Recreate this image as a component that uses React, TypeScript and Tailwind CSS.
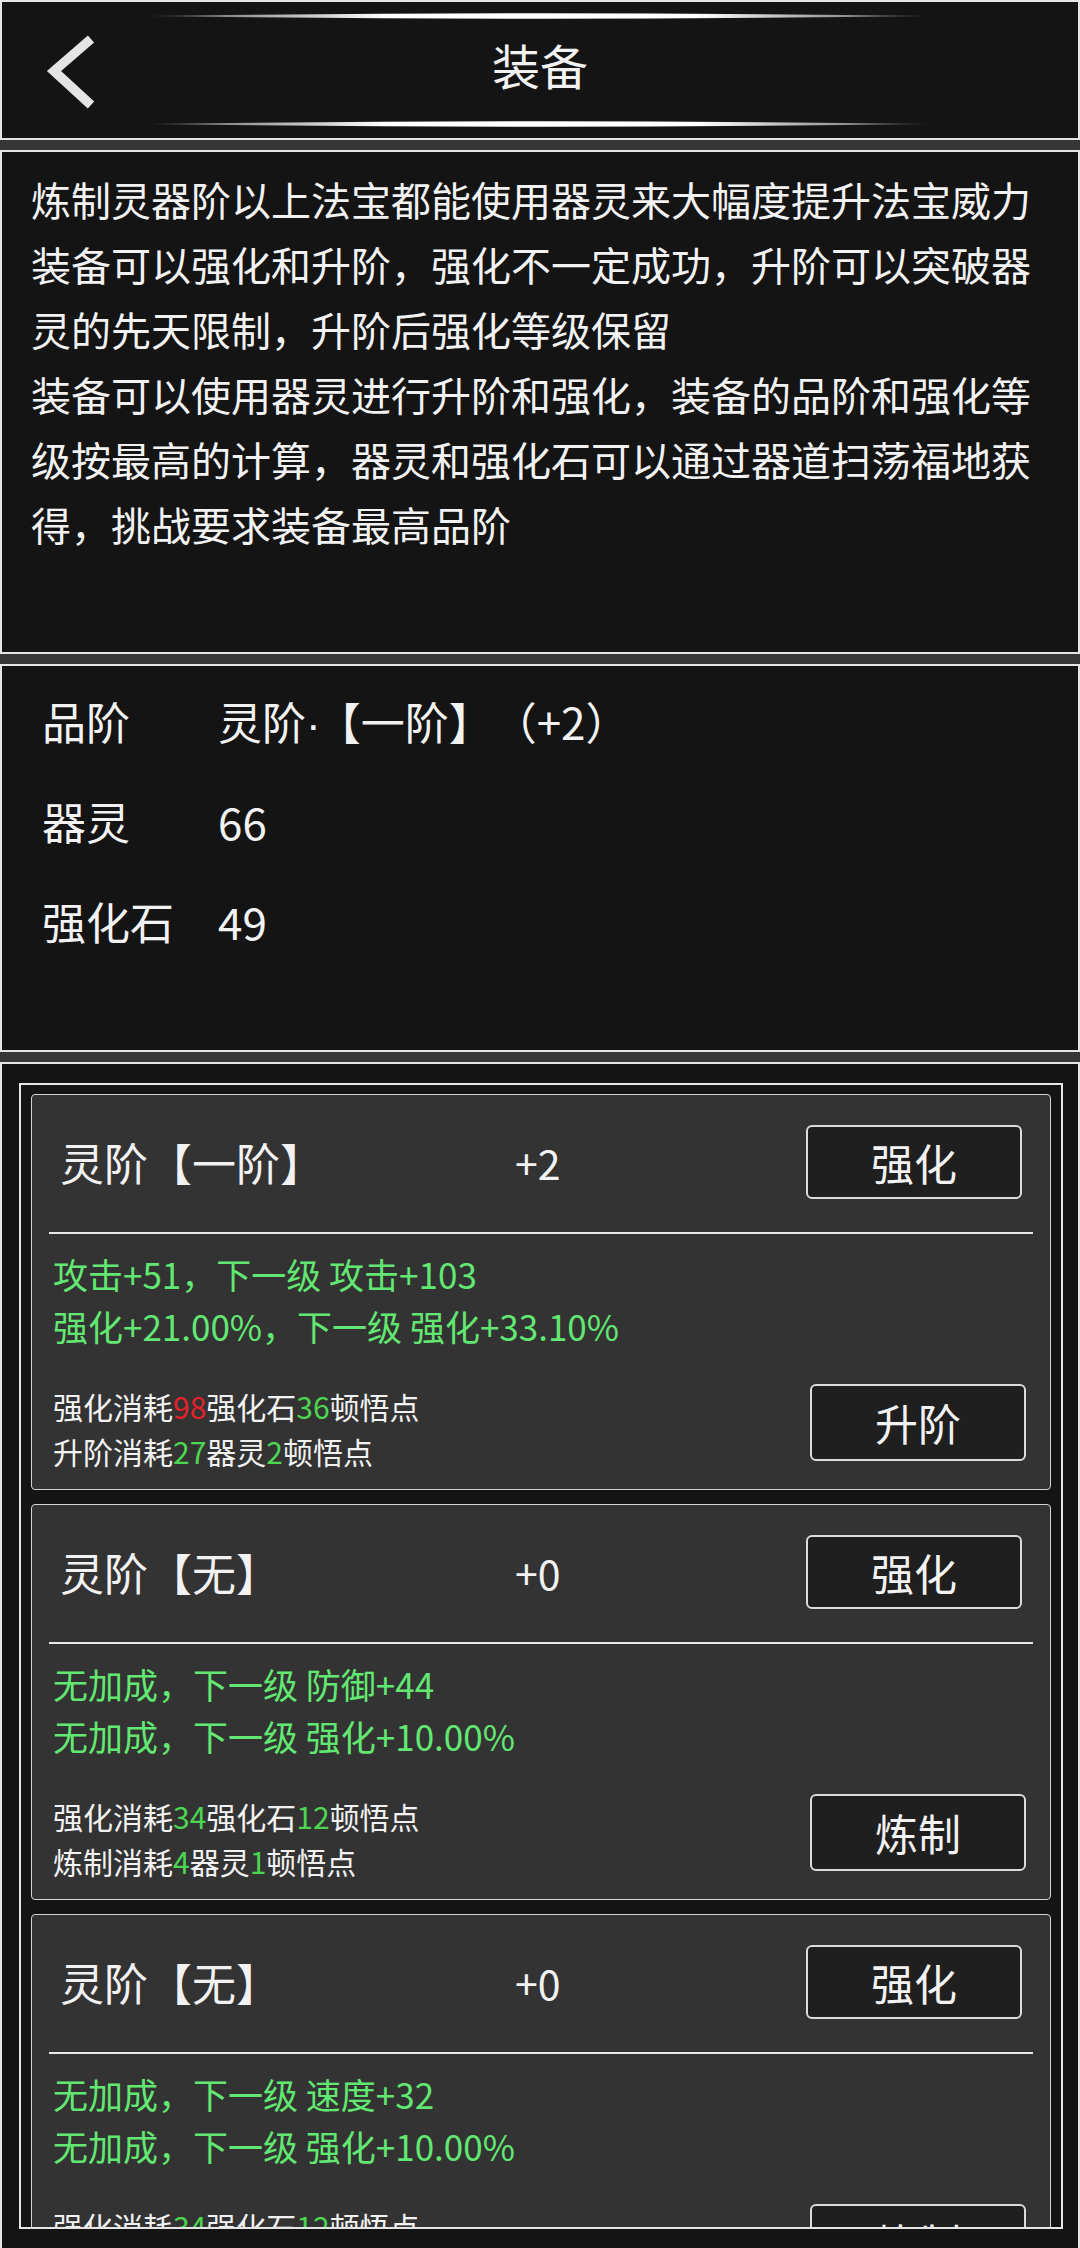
import React from 'react';

type Seg = { t: string; c?: 'r' | 'g' };

type Item = {
  title: string;
  plus: string;
  bonus: [string, string];
  cost: [Seg[], Seg[]];
  action: string;
};

const items: Item[] = [
  {
    title: '灵阶【一阶】',
    plus: '+2',
    bonus: ['攻击+51，下一级 攻击+103', '强化+21.00%，下一级 强化+33.10%'],
    cost: [
      [{ t: '强化消耗' }, { t: '98', c: 'r' }, { t: '强化石' }, { t: '36', c: 'g' }, { t: '顿悟点' }],
      [{ t: '升阶消耗' }, { t: '27', c: 'g' }, { t: '器灵' }, { t: '2', c: 'g' }, { t: '顿悟点' }],
    ],
    action: '升阶',
  },
  {
    title: '灵阶【无】',
    plus: '+0',
    bonus: ['无加成，下一级 防御+44', '无加成，下一级 强化+10.00%'],
    cost: [
      [{ t: '强化消耗' }, { t: '34', c: 'g' }, { t: '强化石' }, { t: '12', c: 'g' }, { t: '顿悟点' }],
      [{ t: '炼制消耗' }, { t: '4', c: 'g' }, { t: '器灵' }, { t: '1', c: 'g' }, { t: '顿悟点' }],
    ],
    action: '炼制',
  },
  {
    title: '灵阶【无】',
    plus: '+0',
    bonus: ['无加成，下一级 速度+32', '无加成，下一级 强化+10.00%'],
    cost: [
      [{ t: '强化消耗' }, { t: '34', c: 'g' }, { t: '强化石' }, { t: '12', c: 'g' }, { t: '顿悟点' }],
      [{ t: '炼制消耗' }, { t: '4', c: 'g' }, { t: '器灵' }, { t: '1', c: 'g' }, { t: '顿悟点' }],
    ],
    action: '炼制',
  },
];

const Glow = () => (
  <svg width="780" height="8" viewBox="0 0 780 8">
    <defs>
      <linearGradient id="glow" x1="0" x2="1" y1="0" y2="0">
        <stop offset="0" stopColor="#444" />
        <stop offset="0.12" stopColor="#999" />
        <stop offset="0.3" stopColor="#fff" />
        <stop offset="0.7" stopColor="#fff" />
        <stop offset="0.88" stopColor="#999" />
        <stop offset="1" stopColor="#444" />
      </linearGradient>
    </defs>
    <path d="M0,4 Q390,-1.5 780,4 Q390,9.5 0,4 Z" fill="url(#glow)" />
  </svg>
);

const Card = ({ item }: { item: Item }) => (
  <div className="h-[396px] shrink-0 bg-[#333333] border-[1.5px] border-[#d4d4d4] rounded-[4px] flex flex-col">
    <div className="flex items-center pt-[30px] pl-[28px] pr-[28px]">
      <div className="w-[455px] text-[44px] leading-[74px]">{item.title}</div>
      <div className="flex-1 text-[41px] leading-[74px]">{item.plus}</div>
      <div className="w-[216px] h-[74px] shrink-0 flex items-center justify-center bg-[#1f1f1f] border-2 border-[#dcdcdc] rounded-[6px] text-[43px] text-[#f2f2f2]">
        强化
      </div>
    </div>
    <div className="mx-[17px] mt-[33px] h-[2px] bg-[#e8e8e8]" />
    <div className="pl-[21px] pt-[14px] text-[35px] leading-[52px] text-[#62e872]">
      <div>{item.bonus[0]}</div>
      <div>{item.bonus[1]}</div>
    </div>
    <div className="flex items-start justify-between pl-[21px] pr-[24px] mt-[32px]">
      <div className="text-[30px] leading-[45px] text-[#f2f2f2]">
        {item.cost.map((line, i) => (
          <div key={i}>
            {line.map((s, j) => (
              <span key={j} className={s.c === 'r' ? 'text-[#e3222a]' : s.c === 'g' ? 'text-[#4cd652]' : ''}>
                {s.t}
              </span>
            ))}
          </div>
        ))}
      </div>
      <div className="w-[216px] h-[77px] shrink-0 flex items-center justify-center bg-[#1f1f1f] border-2 border-[#dcdcdc] rounded-[6px] text-[43px] text-[#f2f2f2]">
        {item.action}
      </div>
    </div>
  </div>
);

const App: React.FC = () => {
  return (
    <div className="w-[1080px] h-[2248px] overflow-hidden bg-[#363636] flex flex-col text-[#f2f2f2] [text-spacing-trim:space-all] font-['Noto_Sans_CJK_SC','Noto_Sans',sans-serif]">
      {/* header */}
      <div className="relative h-[140px] shrink-0 bg-[#141414] border-2 border-[#e6e6e6] flex flex-col items-center justify-between pt-[10px] pb-[10px]">
        <Glow />
        <div className="text-[48px] leading-[60px] -mt-[13px]">装备</div>
        <Glow />
        <svg className="absolute left-[37px] top-[24px]" width="62" height="92" viewBox="0 0 62 92">
          <polyline points="52,13 15,45 52,79" fill="none" stroke="#e4e4e4" strokeWidth="9.5" strokeLinejoin="miter" />
        </svg>
      </div>

      {/* description */}
      <div className="mt-[10px] h-[504px] shrink-0 bg-[#141414] border-2 border-[#e6e6e6] pl-[29px] pt-[15px]">
        <div className="w-[1010px] text-[40px] leading-[65px]">
          <p>炼制灵器阶以上法宝都能使用器灵来大幅度提升法宝威力</p>
          <p>装备可以强化和升阶，强化不一定成功，升阶可以突破器灵的先天限制，升阶后强化等级保留</p>
          <p>装备可以使用器灵进行升阶和强化，装备的品阶和强化等级按最高的计算，器灵和强化石可以通过器道扫荡福地获得，挑战要求装备最高品阶</p>
        </div>
      </div>

      {/* stats */}
      <div className="mt-[10px] h-[388px] shrink-0 bg-[#141414] border-2 border-[#e6e6e6] pl-[40px] pt-[5px] text-[44px]">
        <div className="flex h-[100px] items-center">
          <div className="w-[176px]">品阶</div>
          <div>
            灵阶<span className="font-['Liberation_Sans',sans-serif] leading-none mr-[-4px]">·</span>【一阶】（+2）
          </div>
        </div>
        <div className="flex h-[100px] items-center">
          <div className="w-[176px]">器灵</div>
          <div>66</div>
        </div>
        <div className="flex h-[100px] items-center">
          <div className="w-[176px]">强化石</div>
          <div>49</div>
        </div>
      </div>

      {/* list */}
      <div className="mt-[10px] h-[1200px] shrink-0 bg-[#141414] border-2 border-[#e6e6e6] pt-[19px] pl-[17px] pr-[15px]">
        <div className="h-[1146px] border-2 border-[#e6e6e6] overflow-hidden px-[10px] pt-[9px] flex flex-col gap-[14px]">
          {items.map((it, i) => (
            <Card key={i} item={it} />
          ))}
        </div>
      </div>
    </div>
  );
};

export default App;
